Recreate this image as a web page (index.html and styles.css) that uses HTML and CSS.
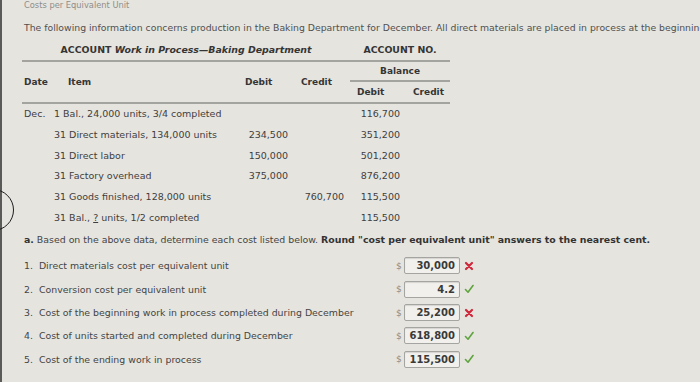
FILE: index.html
```html
<!DOCTYPE html>
<html>
<head>
<meta charset="utf-8">
<link rel="stylesheet" href="styles.css">
</head>
<body>
<div class="page">
  <div class="title">Costs per Equivalent Unit</div>
  <p class="intro">The following information concerns production in the Baking Department for December. All direct materials are placed in process at the beginning of production.</p>
  <table class="ledger">
    <colgroup>
      <col class="c-date"><col class="c-item"><col class="c-debit"><col class="c-credit"><col class="c-bdebit"><col class="c-bcredit">
    </colgroup>
    <thead>
      <tr class="acct">
        <th colspan="4" class="center">ACCOUNT <i>Work in Process—Baking Department</i></th>
        <th colspan="2" class="center">ACCOUNT NO.</th>
      </tr>
      <tr class="hdr1">
        <th rowspan="2" class="h-date">Date</th>
        <th rowspan="2" class="h-item">Item</th>
        <th rowspan="2" class="h-debit">Debit</th>
        <th rowspan="2" class="h-credit">Credit</th>
        <th colspan="2" class="center bal">Balance</th>
      </tr>
      <tr class="hdr2">
        <th class="h-credit">Debit</th>
        <th class="h-credit">Credit</th>
      </tr>
    </thead>
    <tbody>
      <tr><td class="d">Dec.</td><td class="it">1 Bal., 24,000 units, 3/4 completed</td><td class="n"></td><td class="n"></td><td class="n">116,700</td><td></td></tr>
      <tr><td></td><td class="it">31 Direct materials, 134,000 units</td><td class="n">234,500</td><td class="n"></td><td class="n">351,200</td><td></td></tr>
      <tr><td></td><td class="it">31 Direct labor</td><td class="n">150,000</td><td class="n"></td><td class="n">501,200</td><td></td></tr>
      <tr><td></td><td class="it">31 Factory overhead</td><td class="n">375,000</td><td class="n"></td><td class="n">876,200</td><td></td></tr>
      <tr><td></td><td class="it">31 Goods finished, 128,000 units</td><td class="n"></td><td class="n">760,700</td><td class="n">115,500</td><td></td></tr>
      <tr><td></td><td class="it">31 Bal., <u>?</u> units, 1/2 completed</td><td class="n"></td><td class="n"></td><td class="n">115,500</td><td></td></tr>
    </tbody>
  </table>
  <div class="circle"></div>
  <p class="q"><b>a.</b> Based on the above data, determine each cost listed below. <b>Round "cost per equivalent unit" answers to the nearest cent.</b></p>
  <ol class="answers">
    <li class="row"><span class="lbl">1.&nbsp; Direct materials cost per equivalent unit</span><span class="dol">$</span><span class="box">30,000</span><svg class="mark" viewBox="0 0 10 10"><path d="M2 2 L8 8 M8 2 L2 8" stroke="#d0283c" stroke-width="2.2" stroke-linecap="round"/></svg></li>
    <li class="row"><span class="lbl">2.&nbsp; Conversion cost per equivalent unit</span><span class="dol">$</span><span class="box">4.2</span><svg class="mark" viewBox="0 0 10 10"><path d="M1.5 5.5 L4 8.2 L9 1.5" fill="none" stroke="#5fa43f" stroke-width="1.6" stroke-linecap="round" stroke-linejoin="round"/></svg></li>
    <li class="row"><span class="lbl">3.&nbsp; Cost of the beginning work in process completed during December</span><span class="dol">$</span><span class="box">25,200</span><svg class="mark" viewBox="0 0 10 10"><path d="M2 2 L8 8 M8 2 L2 8" stroke="#d0283c" stroke-width="2.2" stroke-linecap="round"/></svg></li>
    <li class="row"><span class="lbl">4.&nbsp; Cost of units started and completed during December</span><span class="dol">$</span><span class="box">618,800</span><svg class="mark" viewBox="0 0 10 10"><path d="M1.5 5.5 L4 8.2 L9 1.5" fill="none" stroke="#5fa43f" stroke-width="1.6" stroke-linecap="round" stroke-linejoin="round"/></svg></li>
    <li class="row"><span class="lbl">5.&nbsp; Cost of the ending work in process</span><span class="dol">$</span><span class="box">115,500</span><svg class="mark" viewBox="0 0 10 10"><path d="M1.5 5.5 L4 8.2 L9 1.5" fill="none" stroke="#5fa43f" stroke-width="1.6" stroke-linecap="round" stroke-linejoin="round"/></svg></li>
  </ol>
  <p class="next"><b>b.</b> Assuming that the direct materials cost is the same for November and December, did the conversion cost per equivalent unit increase, decrease, or remain the same in December?</p>
</div>
</body>
</html>
```

FILE: styles.css
```css
html, body {
  margin: 0;
  padding: 0;
}
body {
  width: 700px;
  height: 382px;
  overflow: hidden;
  background: #e6e4df;
  font-family: "DejaVu Sans", Verdana, sans-serif;
  color: #3b3b3b;
}
.page {
  position: relative;
  height: 382px;
  padding-left: 22px;
  border-left: 2px solid #5a5a58;
  box-sizing: border-box;
  white-space: nowrap;
}
.title {
  font-size: 8.3px;
  line-height: 11px;
  color: #8e8e8a;
}
.intro {
  margin: 10px 0 0 0;
  font-size: 9.3px;
  line-height: 14px;
  color: #505050;
}
.ledger {
  margin-top: 4px;
  margin-left: -2px;
  width: 428px;
  table-layout: fixed;
  border-collapse: separate;
  border-spacing: 0;
  font-size: 9.5px;
  color: #3e3e3e;
}
.c-date { width: 28px; }
.c-item { width: 190px; }
.c-debit { width: 54px; }
.c-credit { width: 56px; }
.c-bdebit { width: 56px; }
.c-bcredit { width: 44px; }
th, td {
  padding: 0;
  white-space: nowrap;
  overflow: visible;
}
th {
  font-weight: bold;
  text-align: left;
  color: #353535;
  font-size: 9px;
}
.center { text-align: center; }
.acct th {
  line-height: 21px;
  font-size: 9.4px;
  border-bottom: 2px solid #a3a3a0;
}
.hdr1 th {
  line-height: 18px;
  vertical-align: middle;
}
.hdr1 th[rowspan] {
  border-bottom: 2px solid #a3a3a0;
}
.hdr1 .bal {
  border-bottom: 2px solid #a3a3a0;
}
.hdr2 th {
  line-height: 20px;
  border-bottom: 2px solid #a3a3a0;
}
.h-date { padding-left: 2px; }
.h-item { padding-left: 18px; }
.h-debit { padding-left: 5px; }
.h-credit { padding-left: 7px; }
tbody td {
  line-height: 20.8px;
}
.d { padding-left: 2px; }
.it { padding-left: 4px; }
.n {
  text-align: right;
  padding-right: 6px;
}
.circle {
  position: absolute;
  left: -30px;
  top: 189px;
  width: 40px;
  height: 40px;
  border: 1.5px solid #1e1e1e;
  border-radius: 50%;
}
.q {
  margin: 4px 0 0 0;
  font-size: 9.4px;
  line-height: 14px;
  color: #444;
}
.q b { color: #333; }
.answers {
  list-style: none;
  margin: 7.5px 0 0 0;
  padding: 0;
}
.row {
  display: grid;
  grid-template-columns: 372px 8px 56px 20px;
  align-items: center;
  height: 23.3px;
  font-size: 9.4px;
  color: #444;
}
.dol {
  font-size: 9px;
  color: #8a8a86;
}
.box {
  box-sizing: border-box;
  height: 17px;
  line-height: 15px;
  border: 1px solid #a4a4a0;
  border-radius: 2px;
  background: #f1f0ec;
  box-shadow: inset 0 1px 1px rgba(0,0,0,0.12);
  text-align: right;
  padding-right: 4px;
  font-weight: bold;
  font-size: 10px;
  color: #3a3a3a;
}
.mark {
  width: 10px;
  height: 10px;
  margin-left: 4px;
}
.next {
  margin: 8px 0 0 0;
  font-size: 9.4px;
  line-height: 14px;
  color: #444;
}
```
